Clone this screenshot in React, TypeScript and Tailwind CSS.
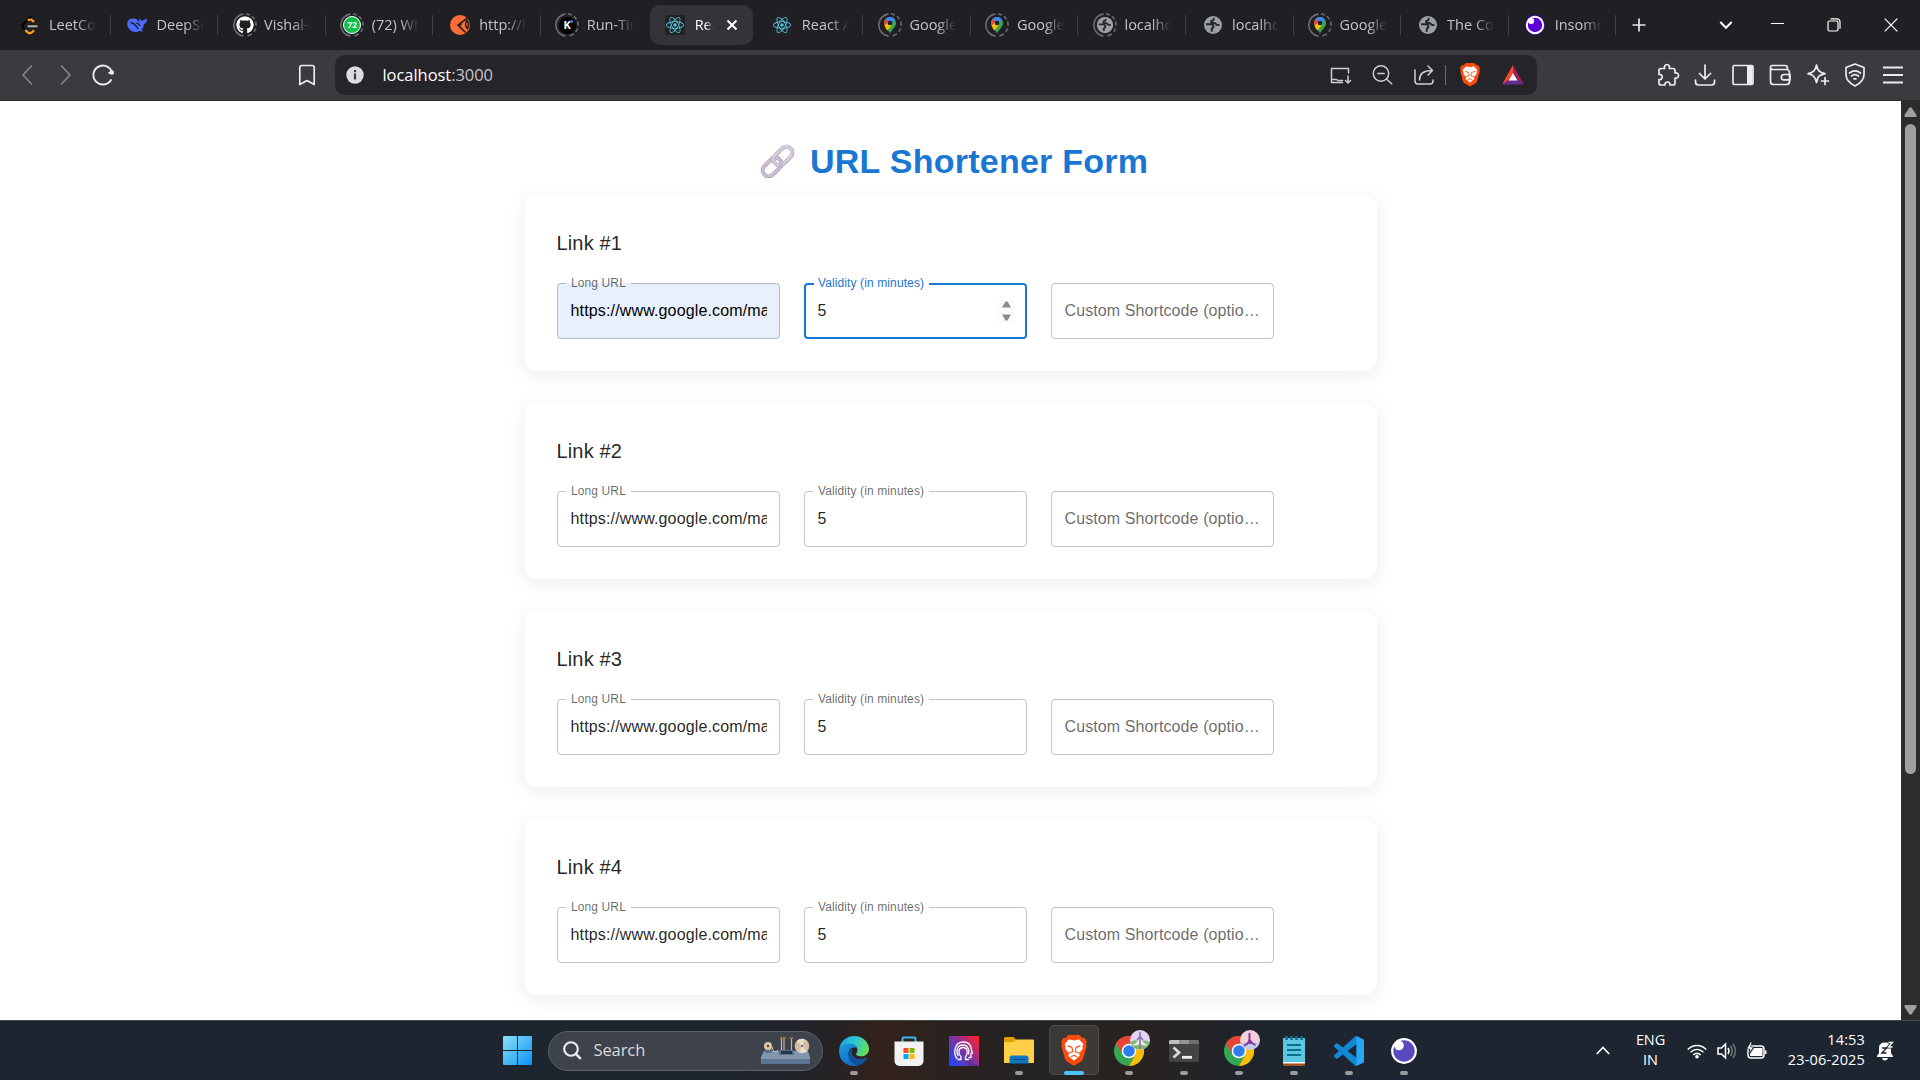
import type { ReactNode } from "react";
import { FaGithub } from "react-icons/fa";
import { SiReact } from "react-icons/si";

const ui = "font-['Open_Sans','Noto_Sans',sans-serif]";

function Sleeping({ children }: { children: ReactNode }) {
  return (
    <span className="relative grid h-6 w-6 place-items-center">
      <svg className="absolute inset-0 h-6 w-6" viewBox="0 0 24 24" fill="none" stroke="#6c6b70" strokeWidth="1.6">
        <path d="M10.5 23.100A11.200 11.200 0 0 1 10.500.9" />
        <path d="M13 .8l4 1.100M19 3.200l2.600 3M22.700 8.500l.5 4.100M22.600 15.500l-1.700 3.300M18.800 21l-4.300 2" />
      </svg>
      {children}
    </span>
  );
}

function MapPin() {
  return (
    <svg width="12" height="17" viewBox="0 0 12 17">
      <path d="M6 17C5.200 13 0 10.600 0 6a6 6 0 0 1 12 0c0 4.600-5.200 7-6 11z" fill="#34a853" />
      <path d="M.5 8.600L4 5l4 3-4.700 5.400C2.200 12 1 10.500.5 8.600z" fill="#fbbc04" />
      <path d="M1.500 2A6 6 0 0 1 11 2.800L7.500 6.500 4.200 4.600z" fill="#4285f4" />
      <path d="M1.500 2L4.300 4.400.6 8.600A6 6 0 0 1 1.500 2z" fill="#ea4335" />
      <circle cx="6" cy="6" r="2.300" fill="#202024" />
    </svg>
  );
}

function Globe() {
  return (
    <svg width="18" height="18" viewBox="0 0 18 18">
      <circle cx="9" cy="9" r="9" fill="#9aa0a6" />
      <path
        d="M10.500 2.500c-1 .3-.8 1.800-2.200 2-1.600.3-1.600 1.900-.2 2.300 1.800.5 3.300-.2 3.900 1.300.4 1 1.800 1 3.500.7M2 8.300h4c2.300 0 3.500.8 3.500 2.300 0 1.500-1.800 1.200-1.800 2.700v2.500"
        fill="none"
        stroke="#25252a"
        strokeWidth="2"
      />
    </svg>
  );
}

function Postman() {
  return (
    <svg width="20" height="20" viewBox="0 0 20 20">
      <circle cx="10" cy="10" r="10" fill="#ff6c37" />
      <path d="M17.500 3L8 10l7.500 7.500M17 5.500c2 2 2 6 .3 8-1.800-1.700-2.300-5-.3-8zM8 10l3.500-.3" fill="none" stroke="#27201f" strokeWidth="1.700" />
    </svg>
  );
}

function Whale() {
  return (
    <svg width="20" height="16" viewBox="0 0 20 16" fill="#4d6bfe">
      <path d="M.3 7C.2 3 3.500.8 7.500 1.600c2.400.4 3 1.900 4.600 3.500.5-1.600 0-2.500.3-4 .9.8 1 2 1.900 2.500 1 .5 1.700-.2 2.800-.5C18 2.800 19 2 20 1.500c.1 2.600-1 5-3 5.600-.5 2.900-1.200 4.300-2.400 5.500l1.600 1.500c-1.500.6-2.600.3-3.500-.3C7.500 17 .6 13.500.3 7z" />
      <path d="M3.500 5.500c3 .2 5.500 3 7.700 6.500M9.200 6.200c1.800 0 3 1.200 3.600 2.800" stroke="#202024" strokeWidth="1.300" fill="none" />
    </svg>
  );
}

function Insomnia() {
  return (
    <svg width="20" height="20" viewBox="0 0 20 20">
      <circle cx="10" cy="10" r="9.900" fill="#3d00c9" />
      <circle cx="10" cy="10" r="8.200" fill="#5b00d6" stroke="#fff" strokeWidth="2" />
      <circle cx="6.200" cy="6" r="3" fill="#fff" />
    </svg>
  );
}

const reactIcon = (
  <span className="grid h-5 w-5 place-items-center rounded-[2px] bg-[#202225]">
    <SiReact className="h-[18px] w-[18px] text-[#58c4dc]" />
  </span>
);
const pin = (
  <Sleeping>
    <MapPin />
  </Sleeping>
);

const tabs: { title: string; icon: ReactNode; active?: boolean; line?: boolean }[] = [
  {
    title: "LeetCode",
    line: true,
    icon: (
      <svg width="18" height="20" viewBox="0 0 18 20" fill="none" strokeWidth="2.300">
        <path d="M10.500 1L2.300 9c-1.200 1.300-1.200 2.700 0 4l2 2" stroke="#050505" />
        <path d="M7 5.500c1.300-1.300 3.300-1.200 4.500 0l1.500 1.500M4.300 15l2 2c1.500 1.400 3.500 1.400 5 0l1.700-1.700" stroke="#ffa116" />
        <path d="M6.500 11.300h10" stroke="#b3b3b3" strokeWidth="2" />
      </svg>
    ),
  },
  { title: "DeepSeek", line: true, icon: <Whale /> },
  {
    title: "Vishal-Raj",
    line: true,
    icon: (
      <Sleeping>
        <FaGithub className="h-[18px] w-[18px] rounded-full bg-[#202024] text-white" />
      </Sleeping>
    ),
  },
  {
    title: "(72) WhatsApp",
    line: true,
    icon: (
      <Sleeping>
        <span className="grid h-[18px] w-[18px] place-items-center rounded-full border-[1.5px] border-white bg-[#11c04a] text-[8px] font-bold text-white">72</span>
      </Sleeping>
    ),
  },
  { title: "http://localhost", line: true, icon: <Postman /> },
  {
    title: "Run-Time",
    icon: (
      <Sleeping>
        <span className="relative grid h-[17px] w-[17px] place-items-center rounded-full bg-black text-[11px] font-bold text-white">
          K<i className="absolute right-[3px] top-[3px] h-[3px] w-[3px] rounded-full bg-[#2d8cff]" />
        </span>
      </Sleeping>
    ),
  },
  { title: "React App", active: true, icon: reactIcon },
  { title: "React App", line: true, icon: reactIcon },
  { title: "Google Maps", line: true, icon: pin },
  { title: "Google Maps", line: true, icon: pin },
  {
    title: "localhost",
    line: true,
    icon: (
      <Sleeping>
        <span className="scale-90">
          <Globe />
        </span>
      </Sleeping>
    ),
  },
  { title: "localhost", line: true, icon: <Globe /> },
  { title: "Google Maps", line: true, icon: pin },
  { title: "The Company", line: true, icon: <Globe /> },
  { title: "Insomnia", line: true, icon: <Insomnia /> },
];

function TabStrip() {
  return (
    <div className="flex h-[50px] items-center bg-[#202024] pl-[3px] text-[14.5px] text-[#c4c4c8]">
      {tabs.map((t, i) => (
        <div
          key={i}
          className={
            t.active
              ? "relative flex h-10 w-[107.55px] shrink-0 items-center text-white"
              : "relative flex h-10 w-[107.55px] shrink-0 items-center"
          }
        >
          {t.active && <div className="absolute inset-y-0 left-[2px] right-[3px] rounded-[10px] bg-[#343338]" />}
          <span className="relative ml-[14.5px] grid h-6 w-6 place-items-center">{t.icon}</span>
          <span
            className={
              t.active
                ? "relative ml-[8px] w-[18px] overflow-hidden whitespace-nowrap tracking-[-0.3px] [mask-image:linear-gradient(to_right,#000_60%,transparent)]"
                : "relative ml-[7.5px] w-[47px] overflow-hidden whitespace-nowrap [mask-image:linear-gradient(to_right,#000_60%,transparent)]"
            }
          >
            {t.title}
          </span>
          {t.active && (
            <svg className="relative ml-[13.5px]" width="12" height="12" viewBox="0 0 12 12" stroke="#fff" strokeWidth="2">
              <path d="M1.500 1.500l9 9M10.500 1.500l-9 9" />
            </svg>
          )}
          {t.line && <i className="ml-auto h-5 w-px bg-[#424147]" />}
        </div>
      ))}
      <div className="flex flex-1 items-center text-white">
        <svg className="ml-[15.5px]" width="14" height="14" viewBox="0 0 14 14" stroke="#e6e6e8" strokeWidth="1.700">
          <path d="M7 .5v13M.5 7h13" />
        </svg>
        <svg className="ml-[73.5px]" width="14" height="10" viewBox="0 0 14 10" fill="none" stroke="#fff" strokeWidth="2">
          <path d="M1.300 2L7 7.800 12.700 2" />
        </svg>
        <svg className="ml-[38px]" width="13" height="14" viewBox="0 0 13 14" stroke="#fff">
          <path d="M0 5.500h13" />
        </svg>
        <svg className="ml-[42.5px]" width="14" height="14" viewBox="0 0 14 14" fill="none" stroke="#fff" strokeWidth="1.200">
          <rect x="1" y="3" width="10" height="10" rx="1.500" />
          <path d="M3.500.8h6.500a3 3 0 0 1 3 3v7" />
        </svg>
        <svg className="ml-[43px]" width="14" height="14" viewBox="0 0 14 14" fill="none" stroke="#fff" strokeWidth="1.200">
          <path d="M.7.7l12.600 12.600M13.300.7L.7 13.300" />
        </svg>
      </div>
    </div>
  );
}

function Ico({ children, className = "" }: { children: ReactNode; className?: string }) {
  return (
    <svg
      className={`shrink-0 ${className}`}
      width="24"
      height="24"
      viewBox="0 0 24 24"
      fill="none"
      stroke="currentColor"
      strokeWidth="1.700"
      strokeLinecap="round"
      strokeLinejoin="round"
    >
      {children}
    </svg>
  );
}

function Toolbar() {
  return (
    <div className="flex h-[51px] items-center border-b border-[#2b2b2f] bg-[#3b3a3f] text-[#ececee]">
      <Ico className="ml-[15px] text-[#85848a]">
        <path d="M16.500 3L8 12l8.500 9" />
      </Ico>
      <Ico className="ml-[15px] text-[#85848a]">
        <path d="M7.500 3l8.500 9-8.500 9" />
      </Ico>
      <Ico className="ml-[12.5px]">
        <path d="M20 17A9.500 9.500 0 1 1 20.500 8" strokeWidth="1.900" />
        <circle cx="20.700" cy="9.500" r="2.300" fill="currentColor" stroke="none" />
        <path d="M18 9.800h4" />
      </Ico>
      <Ico className="ml-[180.5px]">
        <path d="M4.800 21.500V4.500a2 2 0 0 1 2-2h10.400a2 2 0 0 1 2 2v17L12 17.500z" />
      </Ico>
      <div className="ml-[16px] flex h-10 w-[1202px] items-center rounded-[10px] bg-[#252429] text-[#cfced3]">
        <svg className="ml-[11px]" width="18" height="18" viewBox="0 0 18 18">
          <circle cx="9" cy="9" r="8.700" fill="#dddce2" />
          <path d="M9 4v2.200M9 7.500v6" stroke="#3a393e" strokeWidth="2.200" />
        </svg>
        <span className="ml-[18.5px] text-[16.5px] tracking-[-0.05px] text-white">
          localhost<span className="text-[#c6c5ca]">:3000</span>
        </span>
        <Ico className="ml-auto">
          <path d="M20.500 10V5.500H3.500v14h11M3.500 16.500h5l1.500 1h4.500M20 13v6.500M17.500 17.500l2.500 2.500 2.500-2.500" strokeWidth="1.500" />
        </Ico>
        <Ico className="ml-[18px]">
          <circle cx="11" cy="10.500" r="7.700" strokeWidth="1.500" />
          <path d="M7.800 10.500h6.400M16.700 16.200l5 4.500" strokeWidth="1.500" />
        </Ico>
        <Ico className="ml-[18px]">
          <path d="M3 7v11a3 3 0 0 0 3 3h12a3 3 0 0 0 3-3v-1M7.500 17c0-6 3.500-9.500 12-9.500M16 3l4.500 4.500L16 12" strokeWidth="1.500" />
        </Ico>
        <i className="ml-[9px] h-5 w-px bg-[#6d6c71]" />
        <span className="ml-[12px] grid h-6 w-6 place-items-center">
          <BraveLion size={20} />
        </span>
        <svg className="ml-[19px] mr-[12px]" width="24" height="24" viewBox="0 0 24 24">
          <path d="M12 2v8L7.500 17 1 21.500z" fill="#ff4724" />
          <path d="M12 2l11 19.500L16.500 17 12 10z" fill="#9e1f63" />
          <path d="M1 21.500L7.500 17h9l6.500 4.500z" fill="#662d91" />
          <path d="M12 10l4.500 7.500h-9z" fill="#fff" />
        </svg>
      </div>
      <div className="ml-auto mr-[15.5px] flex items-center gap-[13.5px]">
        <Ico>
          <path d="M3 7.500a2 2 0 0 1 2-2h3.700c-.8-2 .4-4 2.300-4s3.100 2 2.300 4H17a2 2 0 0 1 2 2V10c2-.6 3.500.6 3.500 2.500S21 15.600 19 15v5a2 2 0 0 1-2 2h-3c.3-1.800-.9-3-2.500-3S8.700 20.200 9 22H5a2 2 0 0 1-2-2v-3.500c2 .3 3.200-.8 3.200-2.500S5 11.200 3 11.500z" />
        </Ico>
        <Ico>
          <path d="M12 2v13.500M6.500 10.500L12 16l5.500-5.500M2.500 17v2a3 3 0 0 0 3 3h13a3 3 0 0 0 3-3v-2" />
        </Ico>
        <Ico>
          <rect x="2" y="2.500" width="20" height="19" rx="1.500" />
          <path d="M16 2.500h5.500v19H16z" fill="currentColor" stroke="none" />
        </Ico>
        <Ico>
          <path d="M2.500 5v13.500a3 3 0 0 0 3 3h13a3 3 0 0 0 3-3v-9a3 3 0 0 0-3-3h-14a2 2 0 0 1 0-4H17a2.500 2.500 0 0 1 2.500 2.500v1.500M22 11.500h-6a2.700 2.700 0 0 0 0 5.400h6z" />
        </Ico>
        <Ico>
          <path d="M10.500 2c1 5.500 2.800 7.300 8.500 8.700-4 .9-6 2-7 3.800l-1.500 5c-1.200-5.500-3-7.500-8.500-8.800C7.500 9.300 9.500 7.500 10.500 2zM19 14.500v7M15.500 18h7" />
        </Ico>
        <Ico>
          <path d="M12 1l9 3.500v7c0 5.500-4 9-9 11.500-5-2.500-9-6-9-11.500v-7z" />
          <path d="M6.500 10c3.500-2.800 7.500-2.800 11 0M8.500 13c2.200-1.700 4.800-1.700 7 0M11 15.800h2" />
        </Ico>
        <Ico>
          <path d="M2 4.500h20M2 12h20M2 19.500h20" strokeWidth="2" strokeLinecap="butt" />
        </Ico>
      </div>
    </div>
  );
}

function BraveLion({ size }: { size: number }) {
  return (
    <svg width={size} height={size * 1.18} viewBox="0 0 26 31">
      <path d="M7.500 0h11l3 3 2-.3L26 6.500 25.200 9l.5 2.500-3.400 12c-.6 2-1.500 2.800-3 3.800L13 31l-6.300-3.700c-1.500-1-2.400-1.800-3-3.800L.3 11.500.8 9 0 6.500l2.500-3.800 2 .3z" fill="#ff4a0d" />
      <path d="M13 5.500l5-1.300L22.500 9l-1 3 .3 2-3.800 4.600.8 2.400-1.800 1.500L13 26l-4-3.500L7.200 21l.8-2.400L4.200 14l.3-2-1-3L8 4.200z" fill="#fff" />
      <path d="M6.500 11l4.500 1.500M19.500 11L15 12.500M11 12.500l.7 4.500L8 18M15 12.500l-.7 4.500 3.700 1M10 22l3-1.500 3 1.500" fill="none" stroke="#ff4a0d" strokeWidth="1.100" />
    </svg>
  );
}

function LinkEmoji() {
  return (
    <svg width="35" height="35" viewBox="0 0 35 35" fill="none">
      <g transform="rotate(-45 17.500 17.500)">
        <rect x="-1" y="11.500" width="21.500" height="12" rx="6" stroke="#a99bb0" strokeWidth="4" />
        <rect x="-1" y="11.300" width="21.500" height="12" rx="6" stroke="#cbbfd1" strokeWidth="2.800" />
        <rect x="14.500" y="11.500" width="21.500" height="12" rx="6" stroke="#afa3b6" strokeWidth="4" />
        <rect x="14.500" y="11.200" width="21.500" height="12" rx="6" stroke="#d6cddb" strokeWidth="2.800" />
        <path d="M13 23.400h1.500a6 6 0 0 0 6-6" stroke="#c4b8ca" strokeWidth="3.500" />
      </g>
    </svg>
  );
}

function Field({
  label,
  value,
  autofill,
  focused,
}: {
  label: string;
  value?: string;
  autofill?: boolean;
  focused?: boolean;
}) {
  return (
    <div
      className={
        autofill
          ? "relative flex h-14 w-[223px] items-center rounded-[4px] bg-[#e8f0fe] px-[13.5px] text-black"
          : "relative flex h-14 w-[223px] items-center rounded-[4px] px-[13.5px] text-black/87"
      }
    >
      {value ? (
        <>
          <span className="flex-1 overflow-hidden whitespace-nowrap tracking-[0.15px]">{value}</span>
          <fieldset
            className={
              focused
                ? "pointer-events-none absolute inset-x-0 bottom-0 top-[-8px] rounded-[4px] border-2 border-[#1976d2] px-[8px]"
                : "pointer-events-none absolute inset-x-0 bottom-0 top-[-8px] rounded-[4px] border border-black/23 px-[8px]"
            }
          >
            <legend
              className={
                focused
                  ? "h-[17px] pl-[4px] pr-[5px] text-[12px] leading-[17px] tracking-[0.11px] text-[#1976d2]"
                  : "h-[17px] px-[5px] text-[12px] leading-[17px] tracking-[0.11px] text-black/60"
              }
            >
              {label}
            </legend>
          </fieldset>
        </>
      ) : (
        <>
          <span className="-mr-[5px] flex-1 truncate tracking-[0.1px] text-black/60">{label}</span>
          <div className="pointer-events-none absolute inset-0 rounded-[4px] border border-black/23" />
        </>
      )}
      {focused && (
        <svg className="bg-[#fafafa]" width="15" height="22" viewBox="0 0 15 22" fill="#8b8b8b">
          <path d="M3 7.500L6.500 1.500h2l3.500 6zM3 14.500l3.500 6h2l3.500-6z" />
        </svg>
      )}
    </div>
  );
}

function Page() {
  return (
    <main className="flex h-[919px] flex-1 flex-col items-start overflow-hidden bg-white pl-[525px] pt-[39px] font-['Liberation_Sans',Arial,sans-serif]">
      <h1 className="flex h-[42px] w-[852px] items-center pl-[234.5px] text-[34px] font-bold leading-[40px] tracking-[0.25px] text-[#1976d2]">
        <LinkEmoji />
        <span className="ml-[15.5px] -mt-[1px] whitespace-nowrap">URL Shortener Form</span>
      </h1>
      <div className="mt-[13px] flex flex-col gap-8">
        {[1, 2, 3, 4].map((n) => (
          <section key={n} className="h-[176px] w-[852px] rounded-[12px] p-8 shadow-[0_4px_20px_rgba(0,0,0,0.08)]">
            <h2 className="-ml-[0.5px] text-[20px] leading-8 tracking-[0.15px] text-black/87">Link #{n}</h2>
            <div className="mt-6 flex gap-6 text-[16px]">
              <Field label="Long URL" value="https://www.google.com/maps/place" autofill={n === 1} />
              <Field label="Validity (in minutes)" value="5" focused={n === 1} />
              <Field label="Custom Shortcode (optional)" />
            </div>
          </section>
        ))}
      </div>
    </main>
  );
}

function Scrollbar() {
  return (
    <div className="flex h-[919px] w-[19px] flex-col items-center bg-[#2c2c2c]">
      <svg className="mt-[6px]" width="13" height="10" viewBox="0 0 13 10" fill="#9f9f9f">
        <path d="M5.500.5h2L12.500 8q.5 2-1 2H1.500q-1.500 0-1-2z" />
      </svg>
      <div className="mt-[7px] h-[650px] w-[11px] rounded-full bg-[#9f9f9f]" />
      <svg className="mb-[5px] mt-auto" width="13" height="10" viewBox="0 0 13 10" fill="#9f9f9f">
        <path d="M5.500 9.500h2l5-7.500q.5-2-1-2h-10q-1.500 0-1 2z" />
      </svg>
    </div>
  );
}

function Chrome({ avatar }: { avatar: "green" | "pink" }) {
  return (
    <svg width="36" height="36" viewBox="0 0 36 36" className="-mt-[6px] ml-[6px]">
      <circle cx="15" cy="21" r="15" fill="#34a853" />
      <path d="M2 13.500A15 15 0 0 1 28 13.500H15z" fill="#ea4335" />
      <path d="M2 13.500A15 15 0 0 1 15 6v8l-6.500 10z" fill="#ea4335" />
      <path d="M28 13.500A15 15 0 0 1 15 36l6.500-11.200V13.500z" fill="#fbbc04" />
      <circle cx="15" cy="21" r="7.300" fill="#fff" />
      <circle cx="15" cy="21" r="5.800" fill="#2f7cf0" />
      {avatar === "green" ? (
        <g>
          <circle cx="26" cy="10" r="10" fill="#e6d3ef" />
          <path d="M16.500 12.500q5-4 9.500-.5 5-3 9.500.5a10 10 0 0 1-19 0z" fill="#79b868" />
          <path d="M18 15q4-1 8-7 4 6 8 7-4 1.500-8-1-4 2.500-8 1z" fill="#f0e6f5" />
          <path d="M26 2v17M23 10l3-3.500 3 3.500" stroke="#8a76b5" strokeWidth="1.600" fill="none" />
        </g>
      ) : (
        <g>
          <circle cx="26" cy="10" r="10" fill="#f3cfdc" />
          <path d="M16.500 12.500h19a10 10 0 0 1-19 0z" fill="#c5cbea" />
          <path d="M25.500 3v7q-1 4-5.500 5.500M26 10.500q2 3.500 5.500 4.500M26 11v3" stroke="#85379a" strokeWidth="2" fill="none" />
        </g>
      )}
    </svg>
  );
}

function Edge() {
  return (
    <svg width="30" height="30" viewBox="0 0 30 30">
      <defs>
        <linearGradient id="edgeTop" x1="0" y1=".3" x2="1" y2=".6">
          <stop offset="0" stopColor="#1ba5e0" />
          <stop offset=".5" stopColor="#2fc6cf" />
          <stop offset="1" stopColor="#6be04c" />
        </linearGradient>
        <linearGradient id="edgeSide" x1="0" y1="0" x2=".6" y2="1">
          <stop offset="0" stopColor="#1b9de2" />
          <stop offset="1" stopColor="#0f6cc4" />
        </linearGradient>
      </defs>
      <path d="M.3 13C1.200 5.500 7.300 0 15 0c9 0 15 6.500 15 13 0 4.500-3.500 7.300-7.500 7.300-4 0-5.500-1.300-5.500-2.300 0-.8 1.500-1.500 1.500-4C18.500 10.500 15 8 11 8 6 8 2 10.500.3 13z" fill="url(#edgeTop)" />
      <path d="M0 15C0 10.500 5 8 10.500 8c3.500 0 6.500 1.600 7.500 4-7-2-9.500 4-8 9 1.300 4.500 5 7.500 9 8.300-1 .4-2.500.7-4 .7C6.500 30 0 23.500 0 15z" fill="url(#edgeSide)" />
      <path d="M9.700 18c.5-3 2-5 4.300-5.600-2.500 3-1 10.600 7.500 10.600 3 0 4.500-1 5.700-1.500.7-.3 1.200.2.8.9C26 26 22 29 18.500 29.300 13 28.500 9 23.500 9.700 18z" fill="#11529c" />
    </svg>
  );
}

function AppIcons() {
  const apps: { icon: ReactNode; mark?: "dot" | "active" }[] = [
    { icon: <Edge />, mark: "dot" },
    {
      icon: (
        <svg width="30" height="30" viewBox="0 0 30 30">
          <path d="M8.500 7V2.500a1 1 0 0 1 1-1h11a1 1 0 0 1 1 1V7" fill="none" stroke="#35b7f0" strokeWidth="2" />
          <path d="M.5 5.500h29V25a5 5 0 0 1-5 5h-19a5 5 0 0 1-5-5z" fill="#f1f1f1" />
          <path d="M9.500 12h5v5h-5z" fill="#f25022" />
          <path d="M15.500 12h5v5h-5z" fill="#7fba00" />
          <path d="M9.500 18h5v5h-5z" fill="#00a4ef" />
          <path d="M15.500 18h5v5h-5z" fill="#ffb900" />
        </svg>
      ),
    },
    {
      icon: (
        <svg width="30" height="30" viewBox="0 0 30 30" fill="none" stroke="#fff" strokeWidth="1.300" strokeLinecap="round">
          <defs>
            <linearGradient id="sq" x1="0" y1=".9" x2="1" y2=".1">
              <stop offset="0" stopColor="#1d46ff" />
              <stop offset=".5" stopColor="#7b359f" />
              <stop offset="1" stopColor="#ff2030" />
            </linearGradient>
          </defs>
          <path d="M0 0h30v30H0z" fill="url(#sq)" stroke="none" />
          <path d="M15 23l15 7H20z" fill="#5e2f9a" stroke="none" />
          <path d="M8 22.500c-4-5-3-16.500 6.500-16.500 5.500 0 7.500 4 7.800 7.500l1.200 3.500-1.500.5v4h-2" />
          <path d="M9 23.500h3v-2.500c-3.500-4-2.500-9.500 2-9.500s5.500 5.500 2.500 9.500v2.500h3M9 19.500C6.500 14 8.800 9 14 9c4.500 0 6.800 4.500 5.500 9" />
        </svg>
      ),
    },
    {
      icon: (
        <svg width="30" height="27" viewBox="0 0 30 27">
          <path d="M0 1.500Q0 0 1.500 0h8L12 2.500 9 6H0z" fill="#e0a106" />
          <path d="M0 5h9l3-2.500h17q1 0 1 1V26H0z" fill="#ffcf48" />
          <path d="M5.500 21a2.500 2.500 0 0 1 2.500-2.500h14a2.500 2.500 0 0 1 2.500 2.500v5.500h-19z" fill="#0f76c0" />
          <path d="M8.500 22.500h13" stroke="#0a4e8d" />
        </svg>
      ),
      mark: "dot",
    },
    { icon: <BraveLion size={26} />, mark: "active" },
    { icon: <Chrome avatar="green" />, mark: "dot" },
    {
      icon: (
        <svg width="30" height="22" viewBox="0 0 30 22">
          <rect width="30" height="22" rx="1.500" fill="#444" />
          <path d="M0 4V1.500Q0 0 1.500 0H10v4z" fill="#c0c0c0" />
          <path d="M10 0h10v4H10z" fill="#949494" />
          <path d="M20 0h8.500Q30 0 30 1.500V4H20z" fill="#707070" />
          <path d="M4.500 7.500l5.500 5-5.500 5" fill="none" stroke="#d7d7d7" strokeWidth="2.800" />
          <path d="M13 17.300h10" stroke="#eee" strokeWidth="2.800" />
        </svg>
      ),
      mark: "dot",
    },
    { icon: <Chrome avatar="pink" />, mark: "dot" },
    {
      icon: (
        <svg width="22" height="30" viewBox="0 0 22 30">
          <path d="M0 27h22v2q0 1-1 1H1q-1 0-1-1z" fill="#a4541b" />
          <path d="M0 25h22v2.500H0z" fill="#f4f4f4" />
          <path d="M0 2h22v24H0z" fill="#5bc8e2" />
          <path d="M4 9h14M4 14h14M4 19h14" stroke="#116b8b" strokeWidth="2" />
          <path d="M3.500 0v4M8.500 0v4M13.500 0v4M18.500 0v4" stroke="#126e90" strokeWidth="2.600" />
        </svg>
      ),
      mark: "dot",
    },
    {
      icon: (
        <svg width="30" height="30" viewBox="0 0 24 24">
          <path
            fill="#1287d3"
            d="M23.150 2.587L18.210.21a1.494 1.494 0 0 0-1.705.29l-9.460 8.630-4.120-3.128a.999.999 0 0 0-1.276.057L.327 7.261A1 1 0 0 0 .326 8.740L3.899 12 .326 15.260a1 1 0 0 0 .001 1.479L1.650 17.940a.999.999 0 0 0 1.276.057l4.120-3.128 9.460 8.630a1.492 1.492 0 0 0 1.704.29l4.942-2.377A1.500 1.500 0 0 0 24 20.060V3.939a1.500 1.500 0 0 0-.85-1.352zm-5.146 14.861L10.826 12l7.178-5.448v10.896z"
          />
          <path fill="#2aa5f3" d="M18 .2l5.150 2.387A1.500 1.500 0 0 1 24 3.939V20.060a1.500 1.500 0 0 1-.85 1.352L18 23.800z" />
        </svg>
      ),
      mark: "dot",
    },
    {
      icon: (
        <svg width="26" height="26" viewBox="0 0 26 26">
          <circle cx="13" cy="13" r="11.800" fill="#5849be" stroke="#fff" strokeWidth="2.200" />
          <circle cx="8" cy="7.500" r="4.800" fill="#fff" />
        </svg>
      ),
      mark: "dot",
    },
  ];
  return (
    <div className="ml-[3.5px] flex h-[59px]">
      {apps.map((a, i) => (
        <div key={i} className="relative flex h-[59px] w-[55px] items-center justify-center">
          {a.mark === "active" && (
            <div className="absolute inset-x-[2.5px] top-[4px] h-[50px] rounded-[5px] border border-white/10 bg-white/10" />
          )}
          <span className="relative">{a.icon}</span>
          {a.mark === "dot" && <i className="absolute bottom-[5px] h-1 w-2 rounded-full bg-[#9b9b9d]" />}
          {a.mark === "active" && <i className="absolute bottom-[5px] h-1 w-5 rounded-full bg-[#4cc2ff]" />}
        </div>
      ))}
    </div>
  );
}

function Tray() {
  return (
    <div className="ml-auto flex h-[59px] items-center text-[14.5px] leading-5 text-white">
      <svg width="14" height="9" viewBox="0 0 14 9" fill="none" stroke="#fff" strokeWidth="1.700" className="mr-[25px]">
        <path d="M.8 8L7 1.500 13.200 8" />
      </svg>
      <div className="-mt-px w-[31px] text-center tracking-[-0.1px]">
        ENG
        <br />
        IN
      </div>
      <svg className="ml-[21px]" width="20" height="16" viewBox="0 0 20 16" fill="none" stroke="#fff" strokeWidth="1.500">
        <path d="M.7 6.500c5.300-5.500 13.300-5.500 18.600 0M3.500 9.300c4-3.800 9-3.800 13 0M6.200 12c2.300-2 5.300-2 7.600 0" />
        <circle cx="10" cy="13.800" r="1.800" fill="#fff" stroke="none" />
      </svg>
      <svg className="ml-[10px]" width="20" height="18" viewBox="0 0 20 18" fill="none" stroke="#fff" strokeWidth="1.500">
        <path d="M1 6h3.500L8.500 2v14L4.500 12H1z" />
        <path d="M11 6q2 3 0 6" />
        <path d="M13.500 4q3.500 5 0 10M16 2q5 7 0 14" stroke="#6d7278" />
      </svg>
      <svg className="ml-[10px]" width="20" height="17" viewBox="0 0 20 17">
        <rect x="1" y="4" width="16" height="12" rx="3" fill="none" stroke="#fff" strokeWidth="1.500" />
        <path d="M7 6h8.500v8H3v-2z" fill="#fff" />
        <path d="M18 8.500h1.500v3.500H18z" fill="#fff" />
        <path d="M3.500 0L0 7h3l-1 4.500L6.500 5h-3L5 0z" fill="#fff" stroke="#1c2530" strokeWidth=".6" />
      </svg>
      <div className="-mt-[2px] ml-[18px] w-[80px] whitespace-nowrap text-right tracking-[0.15px]">
        14:53
        <br />
        23-06-2025
      </div>
      <svg className="ml-[12px] mr-[26px]" width="17" height="20" viewBox="0 0 17 20">
        <path d="M0 15l2-3V7q0-5.500 6-5.500T14 7v5l2 3v1H0zM5 17h6q-.5 2.500-3 2.500T5 17z" fill="#fff" />
        <path d="M11.500 1.500h4l-4 4.500h4" fill="none" stroke="#1c2530" strokeWidth="3" />
        <path d="M11.500 1.500h4l-4 4.500h4" fill="none" stroke="#fff" strokeWidth="1.300" />
        <path d="M5 7h4.500L5 12h4.500" fill="none" stroke="#1c2530" strokeWidth="1.400" />
      </svg>
    </div>
  );
}

function Taskbar() {
  return (
    <div className="flex h-[60px] items-center border-t border-[#40474d] bg-[linear-gradient(to_right,#1c2530_0px,#1d252f_700px,#222327_820px,#33221b_880px,#2a2220_950px,#232323_1030px,#29231f_1130px,#20242a_1230px,#1c2530_1330px)] pl-[503px]">
      <svg width="29" height="29" viewBox="0 0 29 29">
        <defs>
          <linearGradient id="win" gradientUnits="userSpaceOnUse" x1="0" y1="0" x2="29" y2="29">
            <stop offset="0" stopColor="#8be0fb" />
            <stop offset="1" stopColor="#0a93f5" />
          </linearGradient>
        </defs>
        <path d="M1 0h13v14H0V1q0-1 1-1zM15 0h13q1 0 1 1v13H15zM0 15h14v14H1q-1 0-1-1zM15 15h14v13q0 1-1 1H15z" fill="url(#win)" />
      </svg>
      <div className="ml-[16px] flex h-10 w-[275px] items-center rounded-full border border-[#5b6069] bg-[#3e424a]">
        <svg className="ml-[13.5px]" width="19" height="19" viewBox="0 0 19 19" fill="none" stroke="#eee" strokeWidth="2.100">
          <circle cx="8" cy="8" r="6.800" />
          <path d="M12.800 12.800l5 5" strokeWidth="2.600" />
        </svg>
        <span className="ml-[12px] text-[16.5px] tracking-[-0.1px] text-[#d9dadc]">Search</span>
        <svg className="ml-auto mr-[11px]" width="50" height="28" viewBox="0 0 50 28">
          <path d="M3 14h44l2 6v7H0v-7z" fill="#8396ab" />
          <path d="M0 22h49v5H0z" fill="#5c7391" />
          <path d="M4 11h7v5H4zM18 13h15v5H18z" fill="#5a6f88" />
          <path d="M20 14h11v3H20z" fill="#25364d" />
          <path d="M20.500 1v12M23 1v12M30.500 1v12" stroke="#c3b89a" strokeWidth="1.200" />
          <path d="M19 1h6M28.500 1h4" stroke="#9b7a35" strokeWidth="1.500" />
          <path d="M11 10q2 8 6 3" stroke="#d8cba9" fill="none" />
          <circle cx="7" cy="9" r="4" fill="#d6c8a5" />
          <circle cx="7" cy="9" r="1.200" fill="#4a4334" />
          <circle cx="41" cy="9" r="7.300" fill="#cfc0a5" />
          <path d="M41 9l-5-5a7.300 7.300 0 0 1 8-1.500zM41 9l5 5a7.300 7.300 0 0 1-8 1.500z" fill="#e9dfc9" />
          <circle cx="41" cy="9" r="1" fill="#7b3fae" />
        </svg>
      </div>
      <AppIcons />
      <Tray />
    </div>
  );
}

export default function App() {
  return (
    <div className={`flex h-[1080px] w-[1920px] flex-col overflow-hidden bg-white ${ui}`}>
      <TabStrip />
      <Toolbar />
      <div className="flex">
        <Page />
        <Scrollbar />
      </div>
      <Taskbar />
    </div>
  );
}
